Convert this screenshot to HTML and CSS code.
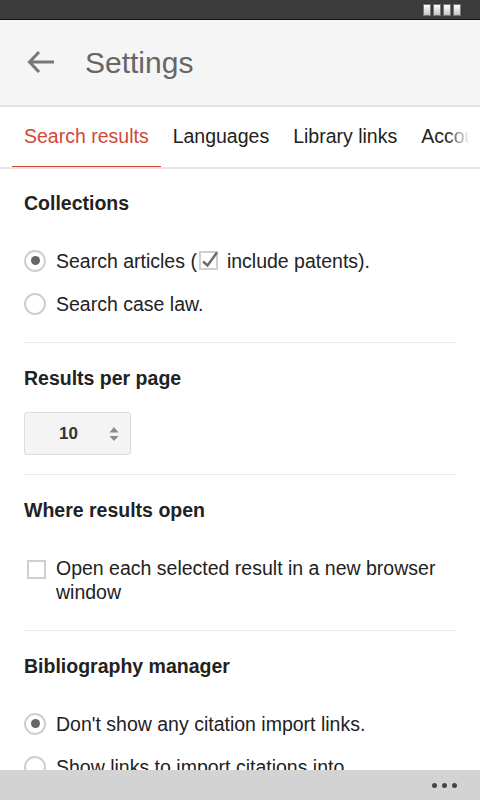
FILE: index.html
```html
<!DOCTYPE html>
<html>
<head>
<meta charset="utf-8">
<link rel="stylesheet" href="styles.css">
</head>
<body>
<div class="statusbar">
  <div class="status-icons"><span></span><span></span><span></span><span></span></div>
</div>
<header class="appbar">
  <svg class="back" width="28" height="24" viewBox="0 0 28 24"><path d="M2.5 12H27M12 2L2.5 12L12 22" fill="none" stroke="#777" stroke-width="3" stroke-linejoin="miter"/></svg>
  <h1 class="title">Settings</h1>
</header>
<nav class="tabs">
  <div class="tab active">Search results</div>
  <div class="tab">Languages</div>
  <div class="tab">Library links</div>
  <div class="tab">Account</div>
</nav>
<main class="content">
  <section class="section">
    <h2 class="heading">Collections</h2>
    <div class="row"><span class="radio checked"></span><span class="label">Search articles (<span class="minicheck"><svg width="19" height="19" viewBox="0 0 19 19"><path d="M4 10.5L8.5 14.5L18 1.5" fill="none" stroke="#6a6a6a" stroke-width="2.4"/></svg></span>include patents).</span></div>
    <div class="row"><span class="radio"></span><span class="label">Search case law.</span></div>
  </section>
  <section class="section">
    <h2 class="heading">Results per page</h2>
    <div class="select"><span class="select-value">10</span><svg class="spin" width="10" height="16" viewBox="0 0 10 16"><path d="M5 1L9.5 6.5H0.5Z" fill="#8a8a8a"/><path d="M0.5 10H9.5L5 15Z" fill="#8a8a8a"/></svg></div>
  </section>
  <section class="section">
    <h2 class="heading">Where results open</h2>
    <div class="row top"><span class="checkbox-wrap"><span class="checkbox"></span></span><span class="label">Open each selected result in a new browser window</span></div>
  </section>
  <section class="section">
    <h2 class="heading">Bibliography manager</h2>
    <div class="row"><span class="radio checked"></span><span class="label">Don't show any citation import links.</span></div>
    <div class="row"><span class="radio"></span><span class="label">Show links to import citations into</span></div>
  </section>
</main>
<footer class="bottombar"><span class="dot"></span><span class="dot"></span><span class="dot"></span></footer>
</body>
</html>
```
FILE: styles.css
```css
html, body {
  margin: 0;
  padding: 0;
  height: 800px;
  overflow: hidden;
  background: #fff;
  font-family: "Liberation Sans", Arial, sans-serif;
  color: #222;
}
.statusbar {
  height: 19px;
  background: #3b3b3b;
  border-bottom: 1px solid #111;
  display: flex;
  justify-content: flex-end;
  align-items: flex-start;
}
.status-icons {
  display: flex;
  gap: 1.5px;
  margin: 4px 19px 0 0;
}
.status-icons span {
  width: 6.5px;
  height: 10px;
  border: 0.5px solid #777;
  background: linear-gradient(#ffffff, #c4c4c4);
}
.appbar {
  height: 85px;
  background: #f5f5f5;
  border-bottom: 2px solid #e4e4e4;
  display: flex;
  align-items: center;
}
.back {
  margin-left: 27px;
  margin-top: -1px;
}
.title {
  margin: 0 0 0 30px;
  font-size: 30px;
  font-weight: normal;
  color: #666;
  line-height: 36px;
}
.tabs {
  position: relative;
  display: flex;
  padding-left: 12px;
  border-bottom: 2px solid #e5e5e5;
  overflow: hidden;
  white-space: nowrap;
}
.tabs::after {
  content: "";
  position: absolute;
  top: 0;
  right: 0;
  width: 34px;
  height: 100%;
  background: linear-gradient(to right, rgba(255,255,255,0), #fff 70%);
}
.tab {
  flex: none;
  font-size: 19.5px;
  line-height: 24px;
  padding: 17px 12px 18px;
  border-bottom: 3px solid transparent;
  margin-bottom: -2px;
  color: #222;
}
.tab.active {
  color: #d14836;
  border-bottom-color: #d14836;
}
.content {
  display: flex;
  flex-direction: column;
}
.section {
  margin: 0 24px;
  padding: 22px 0 17px;
  border-bottom: 1px solid #e8e8e8;
}
.section + .section {
  padding-top: 23px;
}
.heading {
  margin: 0 0 24px;
  font-size: 19.5px;
  line-height: 24px;
  font-weight: bold;
  color: #222;
}
.row {
  display: flex;
  align-items: center;
  padding: 9.5px 0;
  font-size: 19.5px;
  line-height: 24px;
}
.row.top {
  align-items: flex-start;
}
.label {
  margin-left: 10px;
  display: flex;
  align-items: center;
  flex-wrap: wrap;
}
.row.top .label {
  display: block;
}
.radio {
  flex: none;
  width: 22px;
  height: 22px;
  box-sizing: border-box;
  border: 2px solid #cfcfcf;
  border-radius: 50%;
  display: flex;
  align-items: center;
  justify-content: center;
  background: #fff;
}
.radio.checked::before {
  content: "";
  width: 9px;
  height: 9px;
  border-radius: 50%;
  background: #666;
}
.minicheck {
  display: inline-flex;
  width: 19px;
  height: 19px;
  box-sizing: border-box;
  border: 2px solid #cfcfcf;
  margin: 0 9px 0 2px;
  position: relative;
}
.minicheck svg {
  position: absolute;
  left: -2px;
  top: -2px;
}
.checkbox-wrap {
  flex: none;
  width: 22px;
  height: 24px;
  display: flex;
  align-items: center;
  justify-content: flex-end;
}
.checkbox {
  width: 19px;
  height: 19px;
  box-sizing: border-box;
  border: 2px solid #cfcfcf;
  margin-top: 4px;
}
.select {
  width: 107px;
  height: 43px;
  box-sizing: border-box;
  margin: -2px 0 2px;
  border: 1px solid #dcdcdc;
  border-radius: 3px;
  background: #f4f4f4;
  display: flex;
  align-items: center;
  padding: 0 11px 0 34px;
}
.select-value {
  font-size: 17px;
  font-weight: bold;
  color: #333;
}
.spin {
  margin-left: auto;
}
.bottombar {
  position: fixed;
  left: 0;
  right: 0;
  bottom: 0;
  height: 30px;
  background: #d3d3d3;
  display: flex;
  justify-content: flex-end;
  align-items: center;
  gap: 5px;
  padding-right: 23px;
}
.dot {
  width: 5px;
  height: 5px;
  border-radius: 50%;
  background: #444;
}
```
